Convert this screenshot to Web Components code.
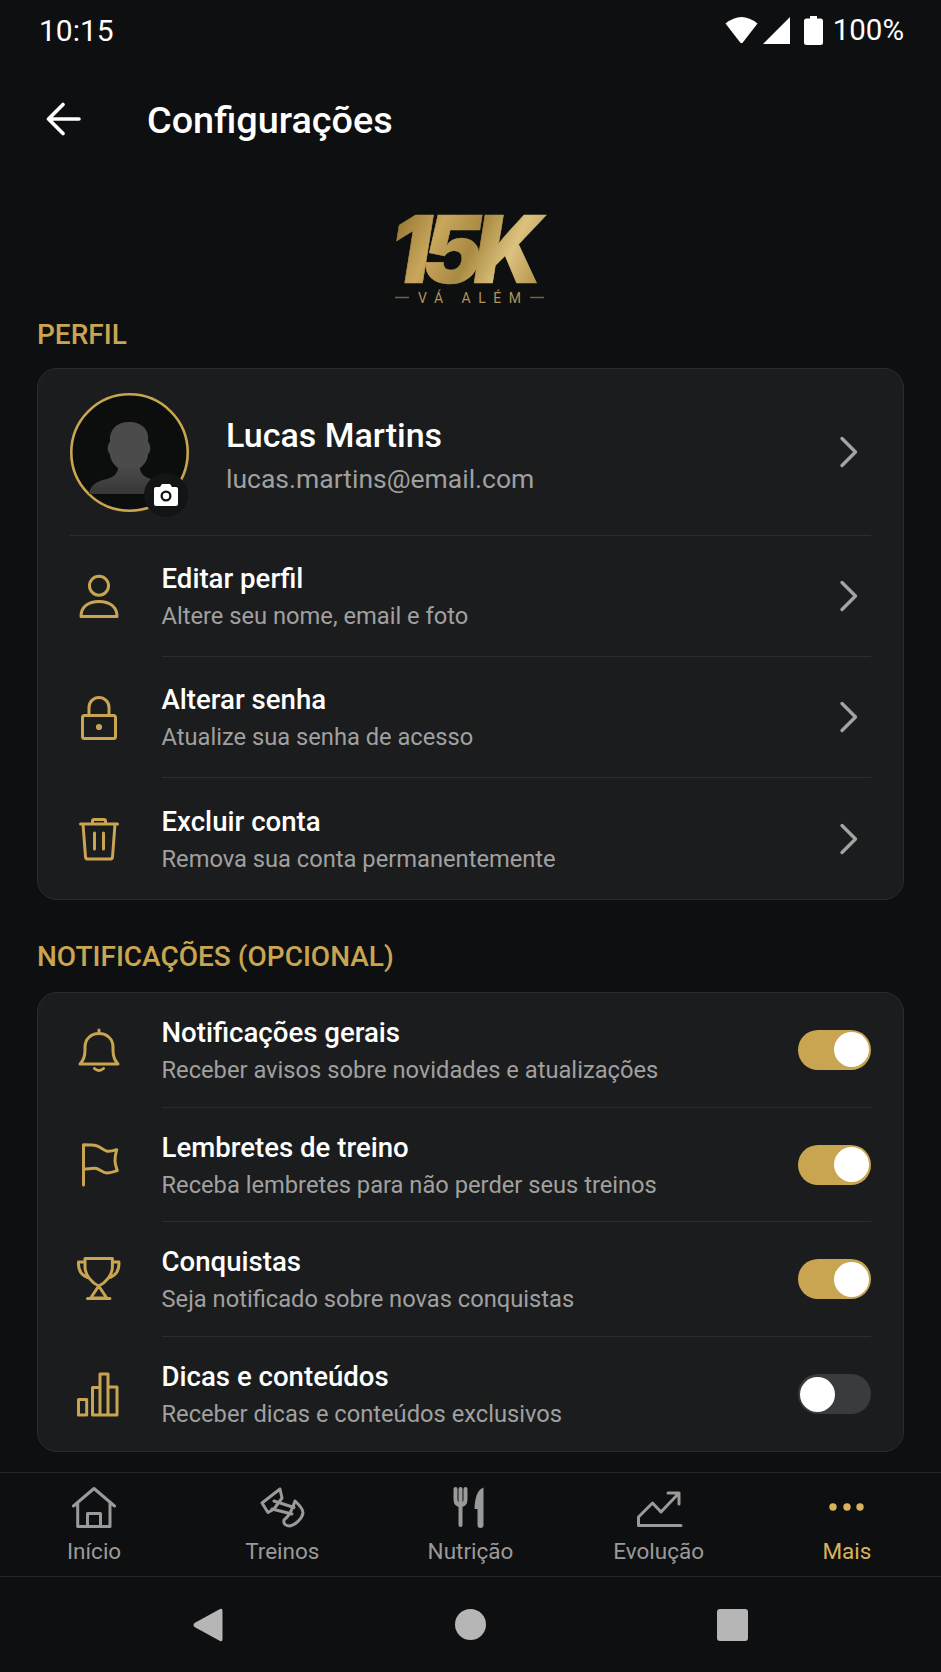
<!DOCTYPE html>
<html lang="pt-BR">
<head>
<meta charset="utf-8">
<title>Configurações</title>
<style>
    html, body {
        background: #0e0f10;
        height: 100%;
        margin: 0;
    }
</style>
</head>
<body>
<settings-screen></settings-screen>

<script>
const GOLD = "#c9a552";

// every icon is drawn on a 48x48 box
const ICONS = {
    person: `<circle cx="24" cy="13.7" r="9.5"/><path d="M6 44.5C6 35 13 29.5 24 29.5S42 35 42 44.5Z"/>`,
    lock: `<rect x="7.5" y="22.5" width="33" height="23" rx="2"/><path d="M14 22V14.5a10 10 0 0 1 20 0V22"/><circle cx="24" cy="34" r="1.6" fill="currentColor"/>`,
    trash: `<path d="M5.5 10h37M17.5 10V7q0-1.5 1.5-1.5h10q1.5 0 1.5 1.5v3M8 10l2.5 33q.2 2 2.5 2h22q2.3 0 2.5-2L40 10M19.5 19v16M28.5 19v16"/>`,
    bell: `<path d="M5 38q5-5 5-14v-3c0-8 6-13.500 14-13.500S38 13 38 21v3q0 9 5 14ZM24 7V4M19.500 42.500q4.500 4 9 0"/>`,
    flag: `<path d="M8.500 45V4.700c4.500 0 9 0 13 1 4 1 8 5.600 11.800 5.600 3 0 6-.8 8.400-1.600-1 3.500-1.700 7.500-1.700 11 0 3.500 1.500 7 2.300 10-3 1-7 2.300-10.600 2.300-4 0-8-4.700-11.700-4.700-4 0-8 .700-11.500.700"/>`,
    trophy: `<path d="M10 3.500h27.400V12c0 8-7 16-13.700 19C17 28 10 20 10 12ZM10 7H3.500C3 14 6 20 12.500 22.500M37.400 7h6.500c.5 7-2.500 13-9 15.500M23.700 31l-8 12h16ZM12.500 43.500h22.400"/>`,
    bars: `<path d="M3.500 29.500h8.200V45H3.500ZM17.500 17.500H25V45h-7.500ZM25 4h8v41h-8ZM33 17h9v28h-9Z"/>`,
    home: `<path d="M3.500 22 24 4.500 44.500 22M7.700 19v23.500h32.300V19M17.500 42.500V29.500h13v13"/>`,
    dumbbell: `<path d="M22 5 4 19l6 9.500 6-3.500 8-11ZM16 17l20 6.500M14 25l20 5M37 17c3 3 8 7 8 12-1 6-8 12-13 13-4 0-7-2-6-6 4-3 8-9 11-19Z"/>`,
    cutlery: `<path stroke-width="4" d="M9.500 5v10q0 6 5 6t5-6V5M14.500 5v36"/><path fill="currentColor" stroke="none" d="M37.500 3.500C31 6 29 14 28.500 25H31.500V41a3 3 0 0 0 6 0Z"/>`,
    chart: `<path d="M3.500 41.500H46M3.500 41.500V33l14-14 8.500 9 18-19M33 9h11v11"/>`,
    dots: `<circle cx="10" cy="23" r="3.700" fill="currentColor" stroke="none"/><circle cx="24" cy="23" r="3.700" fill="currentColor" stroke="none"/><circle cx="37" cy="23" r="3.700" fill="currentColor" stroke="none"/>`
};

class AppIcon extends HTMLElement {
    static get observedAttributes() {
        return(["name"]);
    }

    constructor() {
        super();
        this.attachShadow({mode: "open"});
    }

    attributeChangedCallback() {
        this.shadowRoot.innerHTML = `
            <style>
                :host { display: block; height: 48px; width: 48px; }
                svg { display: block; fill: none; stroke: currentColor; stroke-linecap: round; stroke-linejoin: round; stroke-width: 3; }
            </style>
            <svg viewBox="0 0 48 48" width="48" height="48">${ICONS[this.getAttribute("name")] || ""}</svg>`;
    }
}

class StatusBar extends HTMLElement {
    constructor() {
        super();
        this.attachShadow({mode: "open"});
        this.shadowRoot.innerHTML = `
            <style>
                :host { align-items: center; color: #fff; display: flex; font-size: 30px; height: 60px; justify-content: space-between; padding: 0 37px 0 39px; }
                .right { align-items: center; display: flex; font-size: 29.500px; }
                svg { display: block; fill: #fff; }
                .wifi { margin-right: 5px; }
                .signal { margin-right: 14px; }
                .battery { margin-right: 10px; }
            </style>
            <span>10:15</span>
            <div class="right">
                <svg class="wifi" width="33" height="28" viewBox="0 0 33 28"><path d="M.5 7.500Q16.500-5.500 32.500 7.500L17.800 26.500q-1.300 1.500-2.600 0Z"/></svg>
                <svg class="signal" width="27" height="27" viewBox="0 0 27 27"><path d="M27 0V27H0Z"/></svg>
                <svg class="battery" width="19" height="29" viewBox="0 0 19 29"><path d="M6 0h7v2.500h3.500q2.500 0 2.500 2.500v21.500q0 2.500-2.500 2.500h-14Q0 29 0 26.500V5q0-2.500 2.500-2.500H6Z"/></svg>
                <span>100%</span>
            </div>`;
    }
}

class AppBar extends HTMLElement {
    constructor() {
        super();
        this.attachShadow({mode: "open"});
        this.shadowRoot.innerHTML = `
            <style>
                :host { align-items: center; color: #fff; display: flex; font-size: 37.800px; font-weight: 500; height: 118px; padding-left: 46px; }
                svg { display: block; fill: none; margin-right: 65px; stroke: #fff; stroke-linecap: round; stroke-linejoin: round; stroke-width: 3.600; }
                span { padding-top: 1px; }
            </style>
            <svg width="36" height="34" viewBox="0 0 36 34"><path d="M33 17H3M17 2.500 2.500 17 17 31.500"/></svg>
            <span><slot></slot></span>`;
    }
}

class BrandLogo extends HTMLElement {
    constructor() {
        super();
        this.attachShadow({mode: "open"});
        this.shadowRoot.innerHTML = `
            <style>
                :host { display: flex; justify-content: center; padding-top: 33px; }
                svg { display: block; overflow: visible; }
            </style>
            <svg width="154" height="98" viewBox="0 0 154 98">
                <defs>
                    <linearGradient id="gold" gradientUnits="userSpaceOnUse" x1="0" y1="0" x2="154" y2="75">
                        <stop offset="0" stop-color="#8f6f2e"/>
                        <stop offset=".28" stop-color="#c8a75c"/>
                        <stop offset=".5" stop-color="#a98a42"/>
                        <stop offset=".72" stop-color="#dcc27e"/>
                        <stop offset="1" stop-color="#a8873f"/>
                    </linearGradient>
                </defs>
                <text x="-4" y="71.500" textLength="144" lengthAdjust="spacingAndGlyphs" letter-spacing="-9" font-family="Inter" font-size="94" font-weight="900" font-style="italic" fill="url(#gold)" stroke="url(#gold)" stroke-width=".6">15K</text>
                <path d="M1 86.500H15M136 86.500H150" stroke="#77623a" stroke-width="1.500"/>
                <text x="24" y="92" textLength="103" font-family="Roboto" font-size="14" fill="#b1935a">VÁ ALÉM</text>
            </svg>`;
    }
}

class SectionTitle extends HTMLElement {
    constructor() {
        super();
        this.attachShadow({mode: "open"});
        this.shadowRoot.innerHTML = `
            <style>
                :host { color: ${GOLD}; display: block; font-size: 28px; font-weight: 500; line-height: 30px; }
            </style>
            <slot></slot>`;
    }
}

class SettingsCard extends HTMLElement {
    constructor() {
        super();
        this.attachShadow({mode: "open"});
        this.shadowRoot.innerHTML = `
            <style>
                :host { background: #1b1c1d; border: 1px solid #2b2c2d; border-radius: 20px; display: block; margin-top: 18px; overflow: hidden; }
            </style>
            <slot></slot>`;
    }
}

class ProfileRow extends HTMLElement {
    constructor() {
        super();
        this.attachShadow({mode: "open"});
        this.shadowRoot.innerHTML = `
            <style>
                :host { display: block; padding: 0 32px; }
                .inner { align-items: center; border-bottom: 1px solid #2c2d2e; display: flex; height: 166px; }
                .avatar { flex: none; height: 119px; margin-right: 37px; position: relative; width: 119px; }
                .avatar svg { display: block; }
                .badge { align-items: center; background: #131415; border-radius: 50%; bottom: -5px; display: flex; height: 44px; justify-content: center; position: absolute; right: 1px; width: 44px; }
                .text { flex: 1; padding-top: 6px; }
                .name { color: #fff; font-size: 34px; font-weight: 500; line-height: 38px; }
                .email { color: #a0a0a0; font-size: 26.500px; line-height: 32px; margin-top: 9px; }
                chevron-mark { margin-right: 12px; }
            </style>
            <div class="inner">
                <div class="avatar">
                    <svg width="119" height="119" viewBox="0 0 119 119">
                        <defs>
                            <linearGradient id="bust" x1="0" y1="0" x2="0" y2="1">
                                <stop offset="0" stop-color="#4b4b4b"/>
                                <stop offset=".6" stop-color="#4b4b4b"/>
                                <stop offset="1" stop-color="#373737"/>
                            </linearGradient>
                        </defs>
                        <circle cx="59.500" cy="59.500" r="58.200" fill="#0c0d0d" stroke="${GOLD}" stroke-width="2.600"/>
                        <path d="M19 101c1-9 8-13 18-15 8-2 11-7 11-11-5-4-8-9-8-14-3-1-3-10 0-12-1-12 6-20 19-20s21 8 19 20c3 2 3 11 0 12 0 5-3 10-8 14 0 4 3 9 11 11 10 2 17 6 18 15Z" fill="url(#bust)"/>
                    </svg>
                    <div class="badge">
                        <svg width="24" height="22" viewBox="0 0 24 22"><path fill="#fff" fill-rule="evenodd" d="M8 0h8l2 3h4q2 0 2 2v15q0 2-2 2H2q-2 0-2-2V5q0-2 2-2h4ZM12 6.500a5.500 5.500 0 1 0 0 11 5.500 5.500 0 0 0 0-11Z"/><circle cx="12" cy="12" r="3.200" fill="#fff"/></svg>
                    </div>
                </div>
                <div class="text">
                    <div class="name"><slot name="name"></slot></div>
                    <div class="email"><slot name="email"></slot></div>
                </div>
                <chevron-mark></chevron-mark>
            </div>`;
    }
}

class SettingsRow extends HTMLElement {
    constructor() {
        super();
        this.attachShadow({mode: "open"});
        this.shadowRoot.innerHTML = `
            <style>
                :host { color: ${GOLD}; display: flex; padding: 0 32px 0 37px; }
                app-icon { align-self: center; flex: none; margin-right: 38.500px; }
                .content { align-items: center; box-sizing: border-box; display: flex; flex: 1; height: var(--row-height, 121px); min-width: 0; }
                :host([divider]) .content { border-top: 1px solid #2c2d2e; }
                .text { flex: 1; padding-top: 1px; }
                .title { color: #fff; font-size: 27.600px; font-weight: 500; line-height: 34px; }
                .sub { color: #a0a0a0; font-size: 23.700px; line-height: 30px; margin-top: 5px; }
                ::slotted(toggle-switch) { flex: none; }
                ::slotted(chevron-mark) { margin-right: 12px; }
            </style>
            <app-icon></app-icon>
            <div class="content">
                <div class="text">
                    <div class="title"><slot name="title"></slot></div>
                    <div class="sub"><slot name="sub"></slot></div>
                </div>
                <slot></slot>
            </div>`;
    }

    connectedCallback() {
        this.shadowRoot.querySelector("app-icon").setAttribute("name", this.getAttribute("icon"));
    }
}

class ChevronMark extends HTMLElement {
    constructor() {
        super();
        this.attachShadow({mode: "open"});
        this.shadowRoot.innerHTML = `
            <style>
                :host { display: block; flex: none; height: 32px; width: 20px; }
                svg { display: block; fill: none; stroke: #a3a3a3; stroke-linecap: round; stroke-linejoin: round; stroke-width: 3.400; }
            </style>
            <svg width="20" height="32" viewBox="0 0 20 32"><path d="M3 2.500 16.500 16 3 29.500"/></svg>`;
    }
}

class ToggleSwitch extends HTMLElement {
    constructor() {
        super();
        this.attachShadow({mode: "open"});
        this.shadowRoot.innerHTML = `
            <style>
                :host { align-items: center; background: #3a3b3c; border-radius: 20px; display: flex; height: 40px; padding: 0 2px; width: 69px; }
                :host([on]) { background: ${GOLD}; justify-content: flex-end; }
                .knob { background: #fff; border-radius: 50%; height: 35px; width: 35px; }
            </style>
            <div class="knob"></div>`;
    }
}

class NavItem extends HTMLElement {
    constructor() {
        super();
        this.attachShadow({mode: "open"});
        this.shadowRoot.innerHTML = `
            <style>
                :host { align-items: center; color: #9a9a9a; display: flex; flex-direction: column; font-size: 22.500px; padding-top: 11px; }
                :host([active]) { color: #d9b35c; }
                span { line-height: 26px; margin-top: 6px; }
            </style>
            <app-icon></app-icon>
            <span><slot></slot></span>`;
    }

    connectedCallback() {
        this.shadowRoot.querySelector("app-icon").setAttribute("name", this.getAttribute("icon"));
    }
}

class BottomNav extends HTMLElement {
    constructor() {
        super();
        this.attachShadow({mode: "open"});
        this.shadowRoot.innerHTML = `
            <style>
                :host { border-bottom: 1px solid #242526; border-top: 1px solid #242526; display: grid; flex: none; grid-template-columns: repeat(5, 1fr); height: 103px; }
            </style>
            <slot></slot>`;
    }
}

class SystemNav extends HTMLElement {
    constructor() {
        super();
        this.attachShadow({mode: "open"});
        this.shadowRoot.innerHTML = `
            <style>
                :host { align-items: center; display: grid; flex: none; grid-template-columns: repeat(3, 1fr); height: 95px; justify-items: center; padding: 0 77px; }
                svg { display: block; fill: #b6b6b6; }
            </style>
            <svg width="30" height="34" viewBox="0 0 30 34"><path d="M27 1q2.500-1 2.500 2v28q0 3-2.500 2L1.500 19q-2-2 0-4Z"/></svg>
            <svg width="31" height="31" viewBox="0 0 31 31"><circle cx="15.500" cy="15.500" r="15.500"/></svg>
            <svg width="31" height="32" viewBox="0 0 31 32"><rect width="31" height="32" rx="3"/></svg>`;
    }
}

class SettingsScreen extends HTMLElement {
    constructor() {
        super();
        this.attachShadow({mode: "open"});
        this.shadowRoot.innerHTML = `
            <style>
                :host { background: #0e0f10; display: flex; flex-direction: column; font-family: Roboto, sans-serif; height: 1672px; overflow: hidden; }
                main { display: flex; flex: 1; flex-direction: column; padding: 0 37px; }
                brand-logo { margin-bottom: 11px; }
                .second { margin: 42px 0 2px; }
            </style>
            <status-bar></status-bar>
            <app-bar>Configurações</app-bar>
            <main>
                <brand-logo></brand-logo>
                <section-title>PERFIL</section-title>
                <settings-card>
                    <profile-row>
                        <span slot="name">Lucas Martins</span>
                        <span slot="email">lucas.martins@email.com</span>
                    </profile-row>
                    <settings-row icon="person" style="--row-height: 120px">
                        <span slot="title">Editar perfil</span>
                        <span slot="sub">Altere seu nome, email e foto</span>
                        <chevron-mark></chevron-mark>
                    </settings-row>
                    <settings-row icon="lock" divider>
                        <span slot="title">Alterar senha</span>
                        <span slot="sub">Atualize sua senha de acesso</span>
                        <chevron-mark></chevron-mark>
                    </settings-row>
                    <settings-row icon="trash" divider style="--row-height: 122px">
                        <span slot="title">Excluir conta</span>
                        <span slot="sub">Remova sua conta permanentemente</span>
                        <chevron-mark></chevron-mark>
                    </settings-row>
                </settings-card>
                <section-title class="second">NOTIFICAÇÕES (OPCIONAL)</section-title>
                <settings-card style="--row-height: 114.600px">
                    <settings-row icon="bell" style="--row-height: 113.800px">
                        <span slot="title">Notificações gerais</span>
                        <span slot="sub">Receber avisos sobre novidades e atualizações</span>
                        <toggle-switch on></toggle-switch>
                    </settings-row>
                    <settings-row icon="flag" divider>
                        <span slot="title">Lembretes de treino</span>
                        <span slot="sub">Receba lembretes para não perder seus treinos</span>
                        <toggle-switch on></toggle-switch>
                    </settings-row>
                    <settings-row icon="trophy" divider>
                        <span slot="title">Conquistas</span>
                        <span slot="sub">Seja notificado sobre novas conquistas</span>
                        <toggle-switch on></toggle-switch>
                    </settings-row>
                    <settings-row icon="bars" divider style="--row-height: 115.400px">
                        <span slot="title">Dicas e conteúdos</span>
                        <span slot="sub">Receber dicas e conteúdos exclusivos</span>
                        <toggle-switch></toggle-switch>
                    </settings-row>
                </settings-card>
            </main>
            <bottom-nav>
                <nav-item icon="home">Início</nav-item>
                <nav-item icon="dumbbell">Treinos</nav-item>
                <nav-item icon="cutlery">Nutrição</nav-item>
                <nav-item icon="chart">Evolução</nav-item>
                <nav-item icon="dots" active>Mais</nav-item>
            </bottom-nav>
            <system-nav></system-nav>`;
    }
}

customElements.define("app-icon", AppIcon);
customElements.define("status-bar", StatusBar);
customElements.define("app-bar", AppBar);
customElements.define("brand-logo", BrandLogo);
customElements.define("section-title", SectionTitle);
customElements.define("settings-card", SettingsCard);
customElements.define("profile-row", ProfileRow);
customElements.define("settings-row", SettingsRow);
customElements.define("chevron-mark", ChevronMark);
customElements.define("toggle-switch", ToggleSwitch);
customElements.define("nav-item", NavItem);
customElements.define("bottom-nav", BottomNav);
customElements.define("system-nav", SystemNav);
customElements.define("settings-screen", SettingsScreen);
</script>
</body>
</html>
